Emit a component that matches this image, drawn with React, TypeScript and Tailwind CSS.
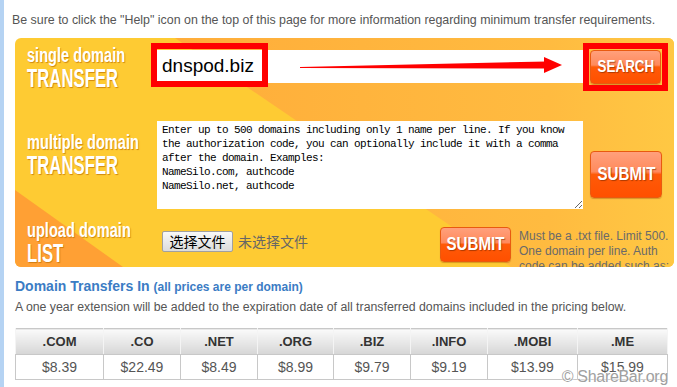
import React from "react";

const arial = "font-['Liberation_Sans',Arial,sans-serif]";

const tlds = [
  { name: ".COM", price: "$8.39", w: "w-[88px]" },
  { name: ".CO", price: "$22.49", w: "w-[77px]" },
  { name: ".NET", price: "$8.49", w: "w-[77px]" },
  { name: ".ORG", price: "$8.99", w: "w-[76px]" },
  { name: ".BIZ", price: "$9.79", w: "w-[77px]" },
  { name: ".INFO", price: "$9.19", w: "w-[77px]" },
  { name: ".MOBI", price: "$13.99", w: "w-[90px]" },
  { name: ".ME", price: "$15.99", w: "w-[90px]" },
];

// condensed headline type, squeezed from Arial bold
function Label({ small, big }: { small: string; big: string }) {
  return (
    <div
      className={`${arial} font-bold whitespace-nowrap text-white leading-none [text-shadow:1px_1px_1px_rgba(190,110,0,0.7)]`}
    >
      <div className="text-[20px] origin-left scale-x-[0.73]">{small}</div>
      <div className="text-[25px] origin-left scale-x-[0.67] mt-[1px]">{big}</div>
    </div>
  );
}

function GlossButton({
  label,
  className,
  textClass,
}: {
  label: string;
  className: string;
  textClass: string;
}) {
  return (
    <button
      className={`${className} ${arial} flex items-center justify-center whitespace-nowrap rounded-[4px] border border-[#e85a10] bg-[linear-gradient(to_bottom,#ffa07c_0%,#ff8a5c_44%,#ff5a08_50%,#ff5000_100%)] font-bold text-white shadow-[0_1px_1px_rgba(160,80,0,0.4)] [text-shadow:1px_1px_1px_rgba(120,40,0,0.6)]`}
    >
      <span className={`inline-block ${textClass}`}>{label}</span>
    </button>
  );
}

export default function App() {
  return (
    <div
      className={`${arial} relative h-[387px] w-[677px] overflow-hidden bg-white border-l-4 border-[#b5d3f3]`}
    >
      <div className="pl-[8px] pt-[11px] text-[12.4px] leading-[18px] text-[#555] whitespace-nowrap">
        Be sure to click the "Help" icon on the top of this page for more information regarding
        minimum transfer requirements.
      </div>

      <div className="ml-[11px] mt-[9px] relative w-[659px] h-[229px] rounded-[6px] overflow-hidden">
        <svg className="absolute inset-0" width="659" height="229" viewBox="0 0 659 229">
          <defs>
            <linearGradient id="band" x1="0" x2="1" y1="0" y2="0">
              <stop offset="0" stopColor="#ffad3a" />
              <stop offset="0.75" stopColor="#ffbb40" />
              <stop offset="1" stopColor="#ffc843" />
            </linearGradient>
          </defs>
          <rect width="659" height="229" fill="#fecb33" />
          <polygon points="160,0 659,0 659,229 496,229" fill="url(#band)" />
          <polygon points="0,152 108,229 0,229" fill="#ffa034" />
        </svg>

        <div className="relative flex flex-col">
          {/* single */}
          <div className="flex h-[72px]">
            <div className="w-[137px] pl-[12px] pt-[7px]">
              <Label small="single domain" big="TRANSFER" />
            </div>
            <div className="relative mt-[12px] h-[33px] w-[431px] bg-white">
              <div className="pl-[10px] pt-[5px] text-[19px] leading-[22px] text-black">dnspod.biz</div>
              <div className="absolute left-[-1px] top-[-7px] h-[44px] w-[117px] border-[6px] border-[#f00]" />
              <svg className="absolute left-0 top-0" width="431" height="33" viewBox="0 0 431 33">
                <polygon points="148,17 395,11.5 395,18.5 148,18" fill="#f00" />
                <polygon points="392,7 410,15 392,23" fill="#f00" />
              </svg>
            </div>
            <div className="mt-[5px] h-[48px] w-[85px] border-[6px] border-[#f00] p-[1px]">
              <GlossButton
                label="SEARCH"
                className="h-[34px] w-[71px] text-[17px]"
                textClass="scale-x-[0.79]"
              />
            </div>
          </div>

          {/* multiple */}
          <div className="flex h-[105px]">
            <div className="w-[137px] pl-[12px] pt-[22px]">
              <Label small="multiple domain" big="TRANSFER" />
            </div>
            <textarea
              className="ml-[5px] mt-[11px] h-[88px] w-[426px] bg-white px-[5px] py-[2px] font-['Liberation_Mono',monospace] text-[11px] leading-[14px] tracking-[-0.6px] text-black outline-none"
              defaultValue={
                "Enter up to 500 domains including only 1 name per line. If you know\nthe authorization code, you can optionally include it with a comma\nafter the domain. Examples:\nNameSilo.com, authcode\nNameSilo.net, authcode"
              }
            />
            <GlossButton
              label="SUBMIT"
              className="ml-[7px] mt-[41px] h-[47px] w-[72px] text-[18px]"
              textClass="scale-x-[0.84]"
            />
          </div>

          {/* upload */}
          <div className="flex h-[52px]">
            <div className="w-[137px] pl-[12px] pt-[5px]">
              <Label small="upload domain" big="LIST" />
            </div>
            <div className="flex w-[288px] items-start pt-[16px] pl-[10px] font-['Noto_Sans_CJK_SC',sans-serif] text-[14px]">
              <button className="h-[21px] w-[71px] rounded-[2px] border border-[#a0a0a0] bg-[linear-gradient(to_bottom,#f8f8f8,#dcdcdc)] leading-[19px] text-black">
                选择文件
              </button>
              <span className="ml-[5px] leading-[21px] text-[#666]">未选择文件</span>
            </div>
            <GlossButton
              label="SUBMIT"
              className="mt-[12px] h-[35px] w-[71px] text-[18px]"
              textClass="scale-x-[0.84]"
            />
            <div className="ml-[8px] w-[155px] shrink-0 pt-[14px] text-[12px] leading-[15px] text-[#6a6a6a]">
              Must be a .txt file. Limit 500. One domain per line. Auth code can be added such as:
              NameSilo.com, authcode
            </div>
          </div>
        </div>
      </div>

      <div className="pl-[11px] pt-[10px]">
        <div className="text-[#3b7cc4] font-bold text-[14px] leading-[18px] whitespace-nowrap">
          Domain Transfers In <span className="text-[12px]">(all prices are per domain)</span>
        </div>
        <div className="mt-[3px] text-[12.3px] leading-[16px] text-[#555] whitespace-nowrap">
          A one year extension will be added to the expiration date of all transferred domains
          included in the pricing below.
        </div>
        <table className="mt-[13px] border-collapse border border-[#c8c8c8] text-center">
          <thead>
            <tr>
              {tlds.map((t) => (
                <th
                  key={t.name}
                  className={`${t.w} h-[26px] border-x border-[#f4f4f4] border-b border-b-[#c8c8c8] bg-[linear-gradient(to_bottom,#fafafa,#d6d6d6)] p-0 text-[13px] font-bold text-[#333]`}
                >
                  {t.name}
                </th>
              ))}
            </tr>
          </thead>
          <tbody>
            <tr>
              {tlds.map((t) => (
                <td
                  key={t.name}
                  className="h-[25px] border border-[#c8c8c8] p-0 text-[14px] text-[#555]"
                >
                  {t.price}
                </td>
              ))}
            </tr>
          </tbody>
        </table>
      </div>

      <div className="absolute right-[9px] bottom-[-2px] text-[16px] tracking-[-0.3px] text-[#a0a0a0] [text-shadow:0_0_2px_#fff,0_0_2px_#fff]">
        © ShareBar.org
      </div>
    </div>
  );
}
